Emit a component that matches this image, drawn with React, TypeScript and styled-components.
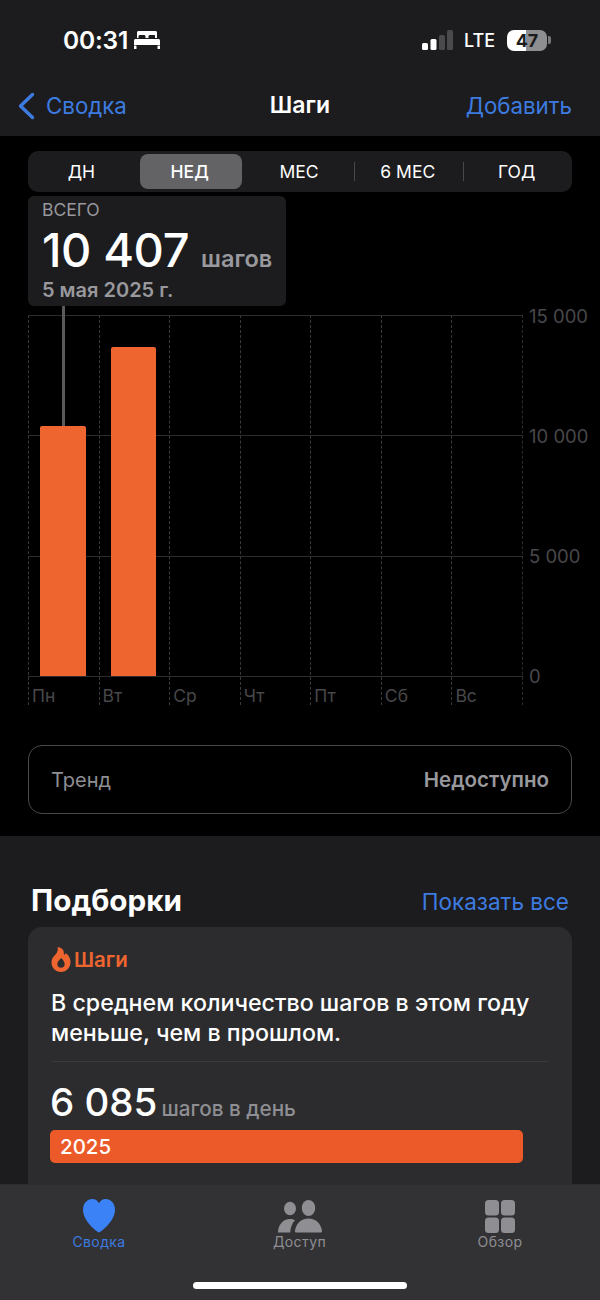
import React from 'react';
import styled, { createGlobalStyle } from 'styled-components';

const GlobalStyle = createGlobalStyle`
  html, body {
    margin: 0;
    padding: 0;
    background: #000;
  }
  * {
    box-sizing: border-box;
  }
`;

const periods = ['ДН', 'НЕД', 'МЕС', '6 МЕС', 'ГОД'];
const axisValues = ['15 000', '10 000', '5 000', '0'];
const MAX_STEPS = 15000;
const days = [
  { label: 'Пн', steps: 10407 },
  { label: 'Вт', steps: 13670 },
  { label: 'Ср', steps: 0 },
  { label: 'Чт', steps: 0 },
  { label: 'Пт', steps: 0 },
  { label: 'Сб', steps: 0 },
  { label: 'Вс', steps: 0 },
];

const BedIcon = () => (
  <svg width="26" height="18" viewBox="0 0 26 18" fill="#fff">
    <path d="M3 1.5C3 .7 3.700 0 4.500 0h17c.8 0 1.500.7 1.500 1.500V7h-2V5.500C21.500 4.400 20.600 4 19.500 4h-3c-1.100 0-2 .4-2 1.500V7h-3V5.500C11.500 4.400 10.600 4 9.500 4h-3c-1.100 0-2 .4-2 1.500V7H3z" />
    <path d="M1.500 8h23C25.300 8 26 8.700 26 9.500V14H0V9.500C0 8.700.7 8 1.500 8z" />
    <rect x="0" y="14.500" width="2.500" height="3.500" rx=".6" />
    <rect x="23.500" y="14.500" width="2.500" height="3.500" rx=".6" />
  </svg>
);

const SignalIcon = () => (
  <svg width="31" height="20" viewBox="0 0 31 20">
    <rect x="0" y="13" width="6" height="7" rx="1.500" fill="#fff" />
    <rect x="8.500" y="9" width="6" height="11" rx="1.500" fill="#fff" />
    <rect x="17" y="5" width="6" height="15" rx="1.500" fill="#4a4a4c" />
    <rect x="25" y="0" width="6" height="20" rx="1.500" fill="#4a4a4c" />
  </svg>
);

const BackChevron = () => (
  <svg width="18" height="28" viewBox="0 0 18 28" fill="none">
    <path d="M15.500 2.500 3.500 14l12 11.500" stroke="#3d7be0" strokeWidth="3.400" strokeLinecap="round" strokeLinejoin="round" />
  </svg>
);

const FlameIcon = () => (
  <svg width="20" height="25" viewBox="0 0 20 25">
    <path
      fill="#ee6530"
      fillRule="evenodd"
      d="M6.500 0c3 .2 6 2 6.300 5 .1 1.200-.2 2.300.6 2.800.8-.1 1-1 1-1.800 2.700 1.500 5.100 4.700 5.100 9 0 5.600-4 10-9.500 10S.5 20.600.5 15.500c0-3.300 1.500-5.300 3.300-7.200C5.700 6.200 7.600 4 6.500 0zM10.200 11c-2.500 2.400-3.900 4.300-3.900 6.300 0 2 1.600 3.500 3.700 3.500s3.700-1.500 3.700-3.500c0-2.300-1.500-4.100-3.500-6.300z"
    />
  </svg>
);

const HeartIcon = () => (
  <svg width="32" height="34" viewBox="0 0 34 36" preserveAspectRatio="none">
    <path
      fill="#3b82f6"
      d="M17 35.500C15.500 35.500 0 24 0 11.500 0 4.500 4.500 0 10 0c3 0 5.500 1.500 7 4.500C18.500 1.500 21 0 24 0c5.500 0 10 4.500 10 11.500C34 24 18.500 35.500 17 35.500z"
    />
  </svg>
);

const PeopleIcon = () => (
  <svg width="44" height="33" viewBox="0 0 44 33" fill="#8e8e93">
    <ellipse cx="12" cy="8.500" rx="6" ry="6.800" />
    <ellipse cx="30.500" cy="8" rx="6.700" ry="8" />
    <path d="M0 32.500C0 25 5 19 12 19c2 0 3.700.4 5 1.200-2.700 2.700-4.500 7-4.800 12.300z" />
    <path d="M18.500 32.500c-1.200 0-1.700-.8-1.500-1.700C18 24 23 18.600 30.500 18.600S43 24 44 30.800c.2.900-.3 1.700-1.500 1.700z" />
  </svg>
);

const GridIcon = () => (
  <svg width="30" height="33" viewBox="0 0 30 33" fill="#8e8e93">
    <rect x="0" y="0" width="14" height="15.500" rx="3.500" />
    <rect x="16" y="0" width="14" height="15.500" rx="3.500" />
    <rect x="0" y="17.500" width="14" height="15.500" rx="3.500" />
    <rect x="16" y="17.500" width="14" height="15.500" rx="3.500" />
  </svg>
);

/**
 * Steps screen
 * Weekly chart, trend row, highlights card and the tab bar
 */
const App: React.FC = () => {
  return (
    <Screen>
      <GlobalStyle />
      <Header>
        <StatusBar>
          <TimeGroup>
            <Time>00:31</Time>
            <BedIcon />
          </TimeGroup>
          <StatusRight>
            <SignalIcon />
            <Network>LTE</Network>
            <Battery>
              <BatteryBody>47</BatteryBody>
              <BatteryNub />
            </Battery>
          </StatusRight>
        </StatusBar>
        <NavBar>
          <BackLink>
            <BackChevron />
            <NavLabel>Сводка</NavLabel>
          </BackLink>
          <NavTitle>Шаги</NavTitle>
          <NavLabel>Добавить</NavLabel>
        </NavBar>
      </Header>

      <ChartSection>
        <Segmented>
          {periods.map((period, i) => (
            <Segment key={period} $active={i === 1} $divider={i === 3 || i === 4}>
              {period}
            </Segment>
          ))}
        </Segmented>

        <SummaryBox>
          <SummaryCaption>ВСЕГО</SummaryCaption>
          <SummaryValue>
            <SummaryNumber>10 407</SummaryNumber>
            <SummaryUnit>шагов</SummaryUnit>
          </SummaryValue>
          <SummaryDate>5 мая 2025 г.</SummaryDate>
        </SummaryBox>

        <Chart>
          <Plot>
            {days.map((day) => (
              <DayColumn key={day.label}>
                <BarArea>
                  {day.steps > 0 && <Bar style={{ height: `${(day.steps / MAX_STEPS) * 100}%` }} />}
                </BarArea>
                <DayLabel>{day.label}</DayLabel>
              </DayColumn>
            ))}
          </Plot>
          <AxisOverlay>
            {axisValues.map((value) => (
              <AxisRow key={value}>
                <AxisLine />
                <AxisValue>{value}</AxisValue>
              </AxisRow>
            ))}
          </AxisOverlay>
          <SelectionStem />
        </Chart>

        <TrendCard>
          <TrendLabel>Тренд</TrendLabel>
          <TrendValue>Недоступно</TrendValue>
        </TrendCard>
      </ChartSection>

      <Highlights>
        <SectionHeader>
          <SectionTitle>Подборки</SectionTitle>
          <ShowAll>Показать все</ShowAll>
        </SectionHeader>
        <Card>
          <CardTag>
            <FlameIcon />
            <span>Шаги</span>
          </CardTag>
          <CardText>В среднем количество шагов в этом году меньше, чем в прошлом.</CardText>
          <CardDivider />
          <AverageRow>
            <AverageNumber>6 085</AverageNumber>
            <AverageUnit>шагов в день</AverageUnit>
          </AverageRow>
          <YearBar>2025</YearBar>
        </Card>
      </Highlights>

      <TabBar>
        <Tabs>
          <Tab $active>
            <TabIcon>
              <HeartIcon />
            </TabIcon>
            <TabLabel>Сводка</TabLabel>
          </Tab>
          <Tab>
            <TabIcon>
              <PeopleIcon />
            </TabIcon>
            <TabLabel>Доступ</TabLabel>
          </Tab>
          <Tab>
            <TabIcon>
              <GridIcon />
            </TabIcon>
            <TabLabel>Обзор</TabLabel>
          </Tab>
        </Tabs>
        <HomeIndicator />
      </TabBar>
    </Screen>
  );
};

const Screen = styled.div`
  display: flex;
  flex-direction: column;
  width: 600px;
  height: 1300px;
  overflow: hidden;
  background-color: #000;
  font-family: Inter, 'Liberation Sans', sans-serif;
  color: #fff;
`;

const Header = styled.header`
  flex: none;
  height: 136px;
  background-color: #1c1c1e;
`;

const StatusBar = styled.div`
  display: flex;
  justify-content: space-between;
  align-items: center;
  height: 80px;
  padding: 0 49px 0 63px;
`;

const TimeGroup = styled.div`
  display: flex;
  align-items: center;
  gap: 6px;
`;

const Time = styled.span`
  font-size: 24.500px;
  font-weight: 600;
  letter-spacing: -0.2px;
`;

const StatusRight = styled.div`
  display: flex;
  align-items: center;
`;

const Network = styled.span`
  margin: 0 12px 0 11px;
  font-size: 18px;
  font-weight: 500;
`;

const Battery = styled.div`
  display: flex;
  align-items: center;
  gap: 1px;
`;

const BatteryBody = styled.div`
  width: 40px;
  height: 21px;
  border-radius: 7px;
  background: linear-gradient(to right, #fff 0 47%, #8e8e90 47% 100%);
  color: #1c1c1e;
  font-size: 18px;
  font-weight: 700;
  line-height: 21px;
  text-align: center;
`;

const BatteryNub = styled.div`
  width: 3px;
  height: 8px;
  border-radius: 0 2px 2px 0;
  background-color: #77777a;
`;

const NavBar = styled.nav`
  position: relative;
  display: flex;
  justify-content: space-between;
  align-items: center;
  height: 52px;
  padding: 0 28px 1px 17px;
`;

const BackLink = styled.div`
  display: flex;
  align-items: center;
  gap: 11px;
`;

const NavLabel = styled.span`
  color: #3d7be0;
  font-size: 22.300px;
`;

const NavTitle = styled.span`
  position: absolute;
  left: 0;
  right: 0;
  top: 11px;
  text-align: center;
  font-size: 23px;
  font-weight: 600;
`;

const ChartSection = styled.section`
  flex: none;
  height: 700px;
  padding: 15px 28px 0;
  background-color: #000;
`;

const Segmented = styled.div`
  display: grid;
  grid-template-columns: repeat(5, 1fr);
  height: 41px;
  padding: 3px 0;
  border-radius: 10px;
  background-color: #1c1c1e;
`;

const Segment = styled.div<{ $active?: boolean; $divider?: boolean }>`
  position: relative;
  display: flex;
  align-items: center;
  justify-content: center;
  margin: ${(p) => (p.$active ? '0 4px 0 3px' : '0')};
  padding-right: 2px;
  border-radius: 8px;
  background-color: ${(p) => (p.$active ? '#636366' : 'transparent')};
  color: #fff;
  font-size: 17.500px;
  font-weight: ${(p) => (p.$active ? 500 : 400)};

  &::before {
    content: '';
    display: ${(p) => (p.$divider ? 'block' : 'none')};
    position: absolute;
    left: 0;
    top: 8px;
    bottom: 8px;
    width: 1px;
    background-color: #48484a;
  }
`;

const SummaryBox = styled.div`
  width: 258px;
  height: 110px;
  margin-top: 4px;
  padding: 4px 14px 0;
  border-radius: 6px;
  background-color: #1c1c1e;
`;

const SummaryCaption = styled.div`
  color: #98989d;
  font-size: 17.500px;
  line-height: 20px;
`;

const SummaryValue = styled.div`
  display: flex;
  align-items: baseline;
  gap: 12px;
  height: 48px;
  margin-top: 6px;
  white-space: nowrap;
`;

const SummaryNumber = styled.span`
  font-size: 47px;
  font-weight: 500;
  line-height: 48px;
  letter-spacing: -0.4px;
`;

const SummaryUnit = styled.span`
  color: #98989d;
  font-size: 23.500px;
  font-weight: 600;
`;

const SummaryDate = styled.div`
  margin-top: 4px;
  color: #98989d;
  font-size: 20px;
  font-weight: 600;
  line-height: 24px;
`;

const Chart = styled.div`
  position: relative;
  width: 544px;
  height: 390px;
  margin-top: 9px;
`;

const Plot = styled.div`
  display: grid;
  grid-template-columns: repeat(7, 1fr);
  width: 495px;
  height: 100%;
  border-right: 1px dashed #2c2c2e;
`;

const DayColumn = styled.div`
  display: flex;
  flex-direction: column;
  border-left: 1px dashed #3a3a3c;
`;

const BarArea = styled.div`
  display: flex;
  align-items: flex-end;
  height: 361px;
  padding: 0 13px 0 11px;
`;

const Bar = styled.div`
  position: relative;
  z-index: 1;
  width: 100%;
  border-radius: 2px 2px 0 0;
  background-color: #ee6530;
`;

const DayLabel = styled.div`
  padding: 10px 0 0 3px;
  color: #48484a;
  font-size: 17.500px;
  line-height: 19px;
`;

const AxisOverlay = styled.div`
  position: absolute;
  top: 0;
  left: 0;
  right: 0;
  height: 362px;
  display: flex;
  flex-direction: column;
  justify-content: space-between;
`;

const AxisRow = styled.div`
  display: flex;
  align-items: center;
  height: 1px;
`;

const AxisLine = styled.div`
  flex: none;
  width: 495px;
  height: 1px;
  background-color: #2c2c2e;
`;

const AxisValue = styled.span`
  margin-left: 6px;
  color: #48484a;
  font-size: 18.500px;
  white-space: nowrap;
`;

const SelectionStem = styled.div`
  position: absolute;
  left: 34px;
  top: -9px;
  width: 3px;
  height: 120px;
  background-color: #5a5a5d;
`;

const TrendCard = styled.div`
  display: flex;
  justify-content: space-between;
  align-items: center;
  height: 69px;
  margin-top: 40px;
  padding: 0 22px;
  border: 1px solid #48484a;
  border-radius: 14px;
`;

const TrendLabel = styled.span`
  color: #8e8e93;
  font-size: 20px;
`;

const TrendValue = styled.span`
  color: #98989d;
  font-size: 20.500px;
  font-weight: 600;
`;

const Highlights = styled.section`
  flex: 1;
  min-height: 0;
  overflow: hidden;
  padding: 0 28px;
  background-color: #1c1c1e;
`;

const SectionHeader = styled.div`
  display: flex;
  justify-content: space-between;
  align-items: center;
  height: 91px;
  padding: 36px 3px 0;
`;

const SectionTitle = styled.h2`
  margin: 0;
  font-size: 29.700px;
  font-weight: 700;
`;

const ShowAll = styled.span`
  margin-top: 4px;
  color: #3d7be0;
  font-size: 22.500px;
`;

const Card = styled.div`
  height: 300px;
  padding: 20px 23px 0;
  border-radius: 14px;
  background-color: #2c2c2e;
`;

const CardTag = styled.div`
  display: flex;
  align-items: center;
  gap: 3px;
  height: 24px;
  color: #ee6530;
  font-size: 20.500px;
  font-weight: 600;
`;

const CardText = styled.p`
  margin: 17px 0 0;
  font-size: 23.200px;
  font-weight: 500;
  line-height: 30px;
`;

const CardDivider = styled.div`
  height: 1px;
  margin-top: 13px;
  background-color: #3a3a3c;
`;

const AverageRow = styled.div`
  display: flex;
  align-items: baseline;
  gap: 4px;
  height: 50px;
  margin: 15px 0 0 -1px;
`;

const AverageNumber = styled.span`
  font-size: 38.500px;
  font-weight: 500;
  line-height: 50px;
`;

const AverageUnit = styled.span`
  color: #8e8e93;
  font-size: 20.700px;
  font-weight: 500;
`;

const YearBar = styled.div`
  width: 473px;
  height: 33px;
  margin: 3px 0 0 -1px;
  padding-left: 10px;
  border-radius: 5px;
  background-color: #ec5a29;
  font-size: 20.500px;
  font-weight: 500;
  line-height: 33px;
`;

const TabBar = styled.footer`
  position: relative;
  flex: none;
  height: 116px;
  background-color: #323234;
  border-top: 1px solid #2c2c2e;
`;

const Tabs = styled.div`
  display: grid;
  grid-template-columns: 198px 203px 198px;
  padding-top: 14px;
`;

const Tab = styled.div<{ $active?: boolean }>`
  display: flex;
  flex-direction: column;
  align-items: center;
  color: ${(p) => (p.$active ? '#3d7be0' : '#8e8e93')};
`;

const TabIcon = styled.div`
  display: flex;
  align-items: center;
  justify-content: center;
  height: 34px;
`;

const TabLabel = styled.span`
  font-size: 14px;
  line-height: 18px;
  letter-spacing: 0.4px;
`;

const HomeIndicator = styled.div`
  position: absolute;
  left: 193px;
  bottom: 11px;
  width: 214px;
  height: 7px;
  border-radius: 4px;
  background-color: #fff;
`;

export default App;
